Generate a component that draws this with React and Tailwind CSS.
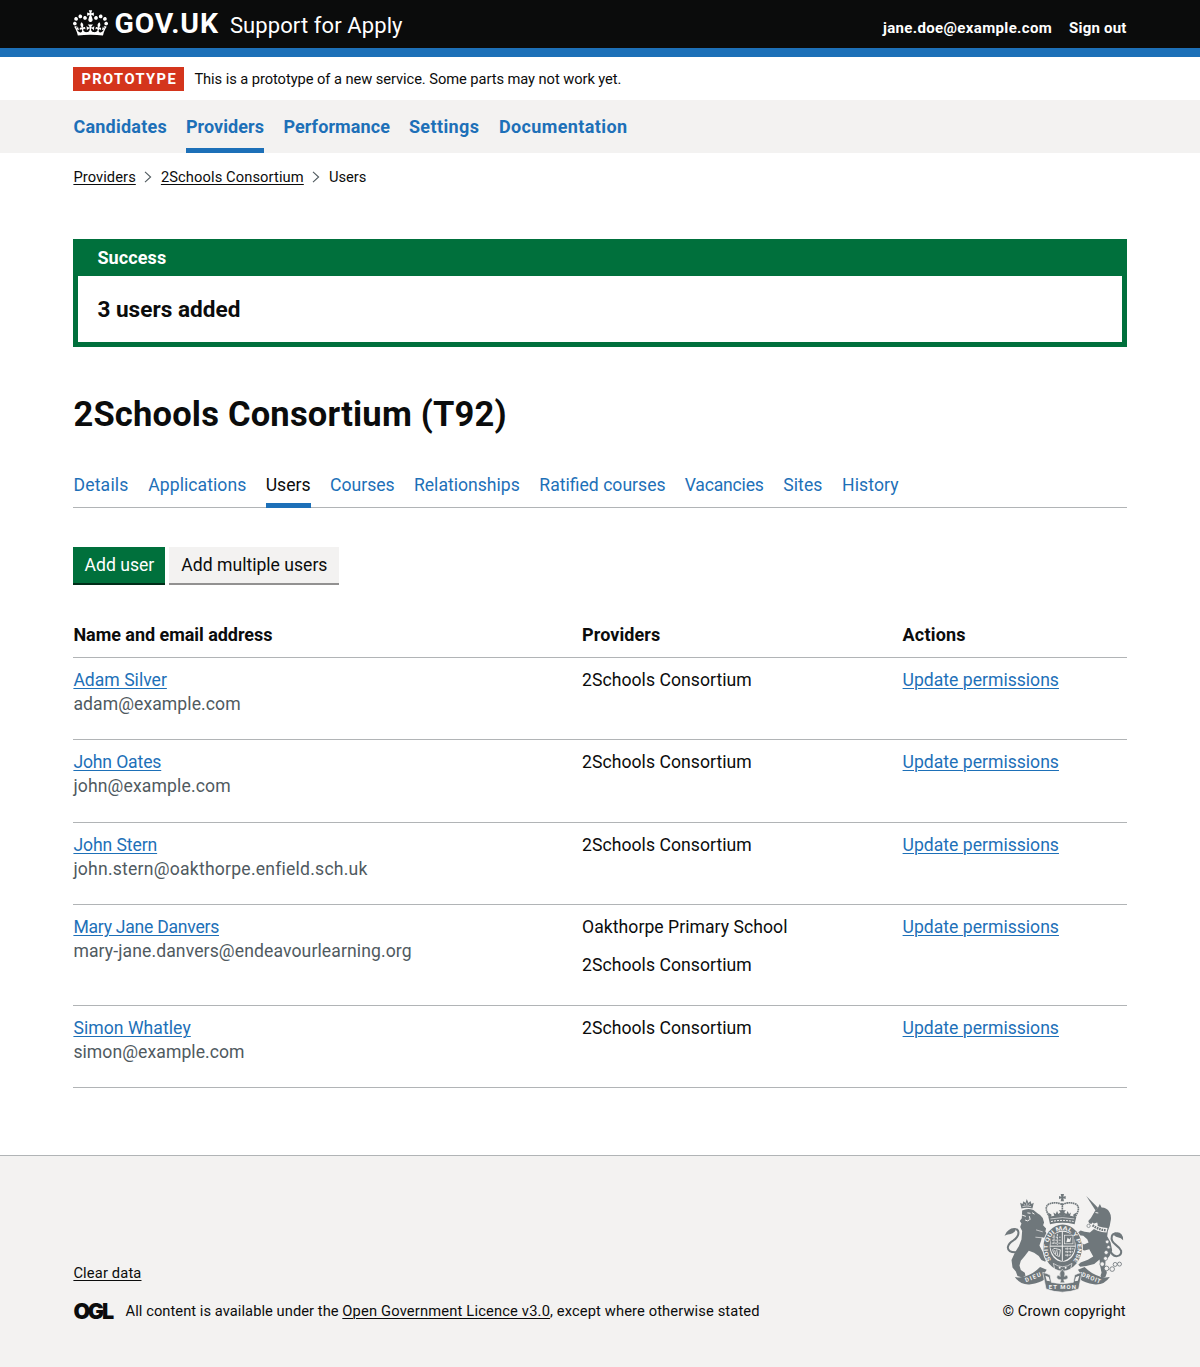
import React from "react";

const NAV = [
  { label: "Candidates", box: "w-[93.5px] tracking-[0.23px]" },
  { label: "Providers", box: "w-[78.5px] tracking-[0.07px]", current: true },
  { label: "Performance", box: "w-[106.5px] tracking-[0.09px]" },
  { label: "Settings", box: "w-[71px] tracking-[0.39px]" },
  { label: "Documentation", box: "w-[129px] tracking-[0.39px]" },
];

const TABS = [
  { label: "Details", box: "w-[55.5px] tracking-[0.2px]" },
  { label: "Applications", box: "w-[98px] tracking-[0.05px]" },
  { label: "Users", box: "w-[45px]", current: true },
  { label: "Courses", box: "w-[64.5px]" },
  { label: "Relationships", box: "w-[106px]" },
  { label: "Ratified courses", box: "w-[126px]" },
  { label: "Vacancies", box: "w-[79px] tracking-[-0.2px]" },
  { label: "Sites", box: "w-[39.5px] tracking-[0.1px]" },
  { label: "History", box: "w-[58px] tracking-[0.1px]" },
];

const USERS = [
  { name: "Adam Silver", email: "adam@example.com", emailTracking: "tracking-[0.07px]", providers: ["2Schools Consortium"] },
  { name: "John Oates", email: "john@example.com", nameTracking: "tracking-[-0.15px]", emailTracking: "tracking-[0.13px]", providers: ["2Schools Consortium"] },
  { name: "John Stern", email: "john.stern@oakthorpe.enfield.sch.uk", nameTracking: "tracking-[-0.1px]", emailTracking: "tracking-[0.22px]", providers: ["2Schools Consortium"] },
  {
    name: "Mary Jane Danvers",
    email: "mary-jane.danvers@endeavourlearning.org",
    nameTracking: "tracking-[-0.26px]",
    emailTracking: "tracking-[0.1px]",
    providers: ["Oakthorpe Primary School", "2Schools Consortium"],
  },
  { name: "Simon Whatley", email: "simon@example.com", nameTracking: "tracking-[0.05px]", emailTracking: "tracking-[0.06px]", providers: ["2Schools Consortium"] },
];

const CROWN =
  "M25 30.2c3.5 1.5 7.7-.2 9.1-3.7 1.5-3.6-.2-7.8-3.9-9.2-3.6-1.4-7.6.3-9.1 3.9-1.4 3.5.3 7.5 3.9 9zM9 39.5c3.6 1.5 7.8-.2 9.2-3.7 1.5-3.6-.2-7.8-3.9-9.1-3.6-1.5-7.6.2-9.1 3.8-1.4 3.5.3 7.5 3.8 9zM4.4 57.2c3.5 1.5 7.7-.2 9.1-3.8 1.5-3.6-.2-7.7-3.9-9.1-3.5-1.5-7.6.3-9.1 3.8-1.4 3.5.3 7.6 3.9 9.1zm38.3-21.4c3.5 1.5 7.7-.2 9.1-3.8 1.5-3.6-.2-7.7-3.9-9.1-3.6-1.5-7.6.3-9.1 3.8-1.3 3.6.4 7.7 3.9 9.1zm64.4-5.6c-3.6 1.5-7.8-.2-9.1-3.7-1.5-3.6.2-7.8 3.8-9.2 3.6-1.4 7.7.3 9.2 3.9 1.3 3.5-.4 7.5-3.9 9zm15.9 9.3c-3.6 1.5-7.7-.2-9.1-3.7-1.5-3.6.2-7.8 3.7-9.1 3.6-1.5 7.7.2 9.2 3.8 1.5 3.5-.3 7.5-3.8 9zm4.7 17.7c-3.6 1.5-7.8-.2-9.2-3.8-1.5-3.6.2-7.7 3.9-9.1 3.6-1.5 7.7.3 9.2 3.8 1.3 3.5-.4 7.6-3.9 9.1zM89.3 35.8c-3.6 1.5-7.8-.2-9.2-3.8-1.4-3.6.2-7.7 3.9-9.1 3.6-1.5 7.7.3 9.2 3.8 1.4 3.6-.3 7.7-3.9 9.1zM69.7 17.7l8.9 4.7V9.3l-8.9 2.8c-.2-.3-.5-.6-.9-.9L72.4 0H59.6l3.5 11.2c-.3.3-.6.5-.9.9l-8.8-2.8v13.1l8.8-4.7c.3.3.6.7.9.9l-5 15.4v.1c-.2.8-.4 1.6-.4 2.4 0 4.1 3.1 7.5 7 8.1h.2c.3 0 .7.1 1 .1.4 0 .7 0 1-.1h.2c4-.6 7.1-4.1 7.1-8.1 0-.8-.1-1.7-.4-2.4V34l-5.1-15.4c.4-.2.7-.6 1-.9zM66 92.8c16.9 0 32.8 1.1 47.1 3.2 4-16.9 8.9-26.7 14-33.5l-9.6-3.4c1 4.9 1.1 7.2 0 10.2-1.5-1.4-3-4.3-4.2-8.7L108.6 76c2.8-2 5-3.2 7.5-3.3-4.4 9.4-10 11.9-13.6 11.2-4.3-.8-6.3-4.6-5.6-7.9 1-4.7 5.7-5.9 8-.5 4.3-8.7-3-11.4-7.6-8.8 7.1-7.2 7.9-13.5 2.1-21.1-8 6.1-8.1 12.3-4.5 20.8-4.7-5.4-12.1-2.5-9.5 6.2 3.4-5.2 7.9-2 7.2 3.1-.6 4.3-6.4 7.8-13.5 7.2-10.3-.9-10.9-8-11.2-13.8 2.5-.5 7.1 1.8 11 7.3L80.2 60c-4.1 4.4-8 5.3-12.3 5.4 1.4-4.4 8-11.6 8-11.6H55.5s6.4 7.2 7.9 11.6c-4.2-.1-8-1-12.3-5.4l1.4 16.4c3.9-5.5 8.5-7.7 10.9-7.3-.3 5.8-.9 12.8-11.1 13.8-7.2.6-12.9-2.9-13.5-7.2-.7-5 3.8-8.3 7.1-3.1 2.7-8.7-4.6-11.6-9.4-6.2 3.7-8.5 3.6-14.7-4.6-20.8-5.8 7.6-5 13.9 2.2 21.1-4.7-2.6-11.9.1-7.7 8.8 2.3-5.5 7.1-4.2 8.1.5.7 3.3-1.3 7.1-5.7 7.9-3.5.7-9-1.8-13.5-11.2 2.5.1 4.7 1.3 7.5 3.3l-4.7-15.4c-1.2 4.4-2.7 7.2-4.3 8.7-1.1-3-.9-5.3 0-10.2l-9.5 3.4c5 6.9 9.9 16.7 14 33.5 14.8-2.1 30.8-3.2 47.7-3.2z";

const ul = "underline decoration-1 underline-offset-[2px]";

function Link({ children, className = "" }) {
  return (
    <a href="#" className={`${ul} whitespace-nowrap ${className}`}>
      {children}
    </a>
  );
}

function Chevron() {
  return (
    <svg viewBox="0 0 8 12" className="h-3 w-2" fill="none" stroke="#505a5f" strokeWidth="1.1">
      <path d="M1 .8 6.6 6 1 11.2" />
    </svg>
  );
}

function RoyalArms() {
  const g = "#6f777b";
  const bg = "#f3f2f1";
  return (
    <svg viewBox="42 42 360 298" className="h-[99px] w-[120px] shrink-0" fill={g} aria-hidden="true">
      {/* lion */}
      <path d="M94 86l-4-18 7 4 3-8 6 5 4-12 5 12 6-6 3 9 7-4-4 18q-17-5-33 0z" />
      <path d="M97 80q13-4 26 0M101 73l4 3M110 68v8M119 72l-4 4" stroke={bg} strokeWidth="2" fill="none" />
      <path d="M96 92q16-8 34-2l12 10q12 6 16 14l4 14-3 8 9 10-2 9 6 10-6 9-11-1-2 10-5 14 8 16 12 14 10 6 2 8-16 4-10-4-8-12-14-10-16-6-12 16-12 14-4 14 4 14 12 8 2 10-10 4-14-4-5-14-10-12-3-22 10-22 12-20 8-20 2-26-6-12 4-10-5-8 6-8z" />
      <path d="M97 106l9 3M106 121q7 5 12-1M113 99l7 1M127 99l5 3M118 110l2 8" stroke={bg} strokeWidth="3" fill="none" strokeLinecap="round" />
      <path d="M138 150l20 6M136 172l22 2" stroke={bg} strokeWidth="2" fill="none" />
      <path d="M78 217q-26 1-25-15 2-12 16-20 16-10 16-24-1-10-9-10" fill="none" stroke={g} strokeWidth="6" />
      <path d="M78 145q-14-2-22 5-10 6-13 18 8-6 16-5 9-1 15-8z" />
      {/* unicorn */}
      <path d="M289 48l36 36-8 8z" />
      <path d="M316 92l8-8 6-12 5 11q16 0 24 14 7 12 3 28-1 14-8 28l-2 16 10 18 5 24-8 18-12 14-1 18 5 18-4 12-12 4-3-8 3-8-4-20-2-20-16 14-24 6-18 2-6-6 7-7 22-8 16-10-12-22-14 4-14-4-8-14 2-10 10 4 8 6 14-6-4-10-12-10-12-2-4-8 8-6 12 4 16 2 14-12 10-10-2-8-14 4-10-1-3-8 8-9z" />
      <path d="M318 98l6 1" stroke={bg} strokeWidth="3" strokeLinecap="round" />
      <path d="M307 128q18 16 46 16l-3 14q-30-1-48-18z" fill={bg} />
      <path d="M308 136q18 14 40 15" fill="none" stroke={g} strokeWidth="7" strokeDasharray="5 2.5" />
      <path d="M358 205q8 26 24 24 14-3 12-16-4-9-16-18-16-12-12-26 3-8 12-8" fill="none" stroke={g} strokeWidth="6" />
      <path d="M374 158q14-4 21 5 6 7 5 18-7-8-14-8-8-1-13-6z" />
      <g fill="none" stroke={g} strokeWidth="2.5">
        <circle cx="337" cy="253" r="7" fill={bg} />
        <circle cx="350" cy="266" r="7" fill={bg} />
        <circle cx="367" cy="268" r="7" />
        <circle cx="376" cy="254" r="6" />
        <circle cx="389" cy="253" r="6" />
      </g>
      <g fill={bg} stroke={g} strokeWidth="2">
        <circle cx="352" cy="186" r="5.5" />
        <circle cx="356" cy="202" r="5" />
        <circle cx="349" cy="218" r="6" />
        <circle cx="347" cy="236" r="6" />
        <circle cx="296" cy="138" r="5" />
      </g>
      {/* crown */}
      <path d="M212 42h10l-2 8 7-2v9l-7-2 2 9h-10l2-9-7 2v-9l7 2z" />
      <path d="M182 116q-24-34-5-44 21-8 40 2 19-10 40-2 19 10-5 44M217 70v24" fill="none" stroke={g} strokeWidth="5" strokeDasharray="5 1.5" />
      <path d="M180 133l-5-22q42-11 84 0l-5 22q-37-9-74 0z" />
      <path d="M193 108l-3-10 7 4 4-9 4 9 6-4-3 10zM226 108l-3-10 6 4 4-9 4 9 6-4-3 10zM209 106l2-10-5-5h22l-5 5 2 10zM178 112l-4-14 10 6v6zM256 112l4-14-10 6v6z" />
      <path d="M181 117q36-8 72 0" fill="none" stroke={bg} strokeWidth="2" />
      <path d="M183 125q34-7 68 0" fill="none" stroke={bg} strokeWidth="3" strokeDasharray="6 3" />
      {/* garter and shield */}
      <ellipse cx="218" cy="203" rx="61" ry="72" fill={bg} />
      <ellipse cx="218" cy="203" rx="58" ry="69" />
      <ellipse cx="218" cy="199" rx="39" ry="47" fill={bg} />
      <path d="M183 171q35-30 70 0l2 31q-4 32-37 43-33-11-37-43z" />
      <path d="M217 154v90M180 199h76" stroke={bg} strokeWidth="3" />
      <path d="M187 172h25M186 181h26M185 190h27M192 165v30M202 162v33M225 207h26M225 216h24M225 226h18M232 203v30M242 203v22" stroke={bg} strokeWidth="2.5" strokeDasharray="7 3" />
      <rect x="224" y="166" width="25" height="26" fill="none" stroke={bg} strokeWidth="2" />
      <path d="M229 187l4-14 5 6 6-8-3 15z" fill={bg} />
      <path d="M188 210q3-6 8-4l15 4-3 20q-17-3-20-20zM194 211l3 12M200 210l3 16" fill="none" stroke={bg} strokeWidth="2.5" />
      <defs>
        <path id="garter" d="M184 240a45 54 0 1 1 68 0" />
      </defs>
      <text fill={bg} fontSize="17" fontWeight="700" fontFamily="Roboto, sans-serif">
        <textPath href="#garter" textLength="235" lengthAdjust="spacingAndGlyphs">
          SOIT QUI MAL Y PENSE
        </textPath>
      </text>
      <path d="M190 251q28 20 56 0l-4 17q-24 13-48 0z" stroke={bg} strokeWidth="2" />
      <circle cx="209" cy="264" r="3" fill={bg} />
      <circle cx="227" cy="264" r="3" fill={bg} />
      {/* ribbons */}
      <path d="M74 292q24 4 42-6 18-8 34-24l20 8-8 12 6 14q-20 14-46 18-30 4-48-22z" />
      <path d="M360 292q-24 4-42-6-18-8-34-24l-20 8 8 12-6 14q20 14 46 18 30 4 48-22z" />
      <path d="M158 278q12 2 22 8l4 22q33 8 66 0l4-22q10-6 22-8l-10 50q-49 19-98 0z" stroke={bg} strokeWidth="2" />
      <path d="M166 288l10 4 4 13-10-2zM268 288l-10 4-4 13 10-2z" fill={bg} />
      <path d="M217 268q12 12 6 22 8-7 11 2-1 9-13 8l3 9h-14l3-9q-12 1-13-8 3-9 11-2-6-10 6-22z" stroke={bg} strokeWidth="1.5" />
      <g fill={bg} fontWeight="700" fontFamily="Roboto, sans-serif">
        <text x="108" y="308" fontSize="18" transform="rotate(-22 108 308)" textLength="50">DIEU</text>
        <text x="274" y="289" fontSize="18" transform="rotate(22 274 289)" textLength="60">DROIT</text>
        <text x="176" y="329" fontSize="18" textLength="82">ET MON</text>
      </g>
    </svg>
  );
}

export default function App() {
  return (
    <div className="flex h-[1367px] flex-col bg-white font-['Roboto','Liberation_Sans',sans-serif] text-[17.6px] leading-6 text-[#0b0c0c]">
      <header className="h-[57px] border-b-9 border-[#1d70b8] bg-[#0b0c0c] px-[73.4px] text-white">
        <div className="flex h-12 items-start justify-between">
          <div className="flex items-start">
            <svg viewBox="0 0 132 97" className="mt-[10px] h-[26px] w-[35px]" fill="white" aria-hidden="true">
              <path d={CROWN} />
            </svg>
            <span className="ml-[6px] mt-[9px] w-[115.5px] text-[28.4px] font-bold leading-[30px] tracking-[0.9px]">GOV.UK</span>
            <span className="mt-[11px] text-[22px] leading-[30px] tracking-[0.1px]">Support for Apply</span>
          </div>
          <nav className="mt-4 flex gap-[17px] whitespace-nowrap text-[15px] font-bold">
            <a href="#" className="tracking-[0.35px]">jane.doe@example.com</a>
            <a href="#" className="w-[57.5px] tracking-[0.2px]">Sign out</a>
          </nav>
        </div>
      </header>

      <div className="flex h-[43px] items-center gap-[10px] px-[73.4px] text-[14.7px]">
        <strong className="h-6 w-[111px] bg-[#d4351c] pl-2 tracking-[1.4px] text-white">PROTOTYPE</strong>
        <span className="tracking-[-0.07px]">This is a prototype of a new service. Some parts may not work yet.</span>
      </div>

      <nav className="flex h-[53px] gap-[19px] bg-[#f3f2f1] px-[73.4px] text-[18px] font-bold text-[#1d70b8]">
        {NAV.map((n) => (
          <a
            key={n.label}
            href="#"
            className={`${n.box} whitespace-nowrap pt-[15px] ${n.current ? "border-b-5 border-[#1d70b8]" : ""}`}
          >
            {n.label}
          </a>
        ))}
      </nav>

      <div className="flex h-12 items-center px-[73.4px] text-[14.7px]">
        <Link className="w-[62.5px] tracking-[0.08px]">Providers</Link>
        <span className="flex w-[25px] justify-center"><Chevron /></span>
        <Link className="w-[143px] tracking-[0.1px]">2Schools Consortium</Link>
        <span className="flex w-[25px] justify-center"><Chevron /></span>
        <span>Users</span>
      </div>

      <main className="px-[73.4px] pt-[38px]">
        <section className="h-[108px] border-5 border-t-4 border-[#00703c]">
          <h2 className="h-[33px] bg-[#00703c] px-[19px] pt-[3px] text-[18px] font-bold tracking-[0.1px] text-white">Success</h2>
          <p className="px-[19px] pt-[18.5px] text-[22.6px] font-bold leading-[30px]">3 users added</p>
        </section>

        <h1 className="mt-[44px] h-[46px] text-[34.5px] font-bold leading-[46px] tracking-[0.2px]">2Schools Consortium (T92)</h1>

        <nav className="mt-[25px] flex h-[46px] gap-[19.4px] border-b border-[#b1b4b6] text-[#1d70b8]">
          {TABS.map((t) => (
            <a
              key={t.label}
              href="#"
              className={`${t.box} h-[46px] whitespace-nowrap pt-[11px] ${t.current ? "border-b-5 border-[#1d70b8] text-[#0b0c0c]" : ""}`}
            >
              {t.label}
            </a>
          ))}
        </nav>

        <div className="mt-[39px] flex h-[38px] gap-1">
          <button className="w-[92px] border-b-2 border-[#002d18] bg-[#00703c] text-white">Add user</button>
          <button className="w-[170px] border-b-2 border-[#929191] bg-[#f3f2f1]">Add multiple users</button>
        </div>

        <div className="mt-[28px] grid h-[45px] grid-cols-[508.7px_320.5px_1fr] border-b border-[#b1b4b6] pt-[10px] text-[18px] font-bold">
          <span className="tracking-[-0.04px]">Name and email address</span>
          <span className="tracking-[0.07px]">Providers</span>
          <span className="tracking-[0.2px]">Actions</span>
        </div>
        {USERS.map((u) => (
          <div key={u.name} className="grid grid-cols-[508.7px_320.5px_1fr] border-b border-[#b1b4b6] pb-[23.3px] pt-[10px]">
            <div>
              <Link className={`text-[#1d70b8] ${u.nameTracking ?? ""}`}>{u.name}</Link>
              <div className={`text-[#505a5f] ${u.emailTracking}`}>{u.email}</div>
            </div>
            <div className="flex flex-col gap-[14px] tracking-[0.04px]">
              {u.providers.map((p) => (
                <span key={p} className={u.providers.length > 1 ? "last:mb-[4.8px]" : ""}>{p}</span>
              ))}
            </div>
            <div>
              <Link className="text-[#1d70b8]">Update permissions</Link>
            </div>
          </div>
        ))}
      </main>

      <footer className="mt-auto flex h-[212px] items-end justify-between border-t border-[#b1b4b6] bg-[#f3f2f1] px-[73.4px] pb-[44px] text-[14.7px]">
        <div>
          <Link className="tracking-[0.15px]">Clear data</Link>
          <div className="mt-[14px] flex items-center">
            <span className="w-[52.2px] font-['Inter'] text-[21.5px] font-black leading-6 tracking-[-2.2px]">OGL</span>
            <p className="tracking-[0.05px]">
              All content is available under the <Link className="tracking-[0.17px]">Open Government Licence v3.0</Link>
              <span className="tracking-[0.12px]">, except where otherwise stated</span>
            </p>
          </div>
        </div>
        <div className="flex w-[125px] flex-col items-center">
          <RoyalArms />
          <span className="mt-[6px] whitespace-nowrap tracking-[0.1px]">© Crown copyright</span>
        </div>
      </footer>
    </div>
  );
}
